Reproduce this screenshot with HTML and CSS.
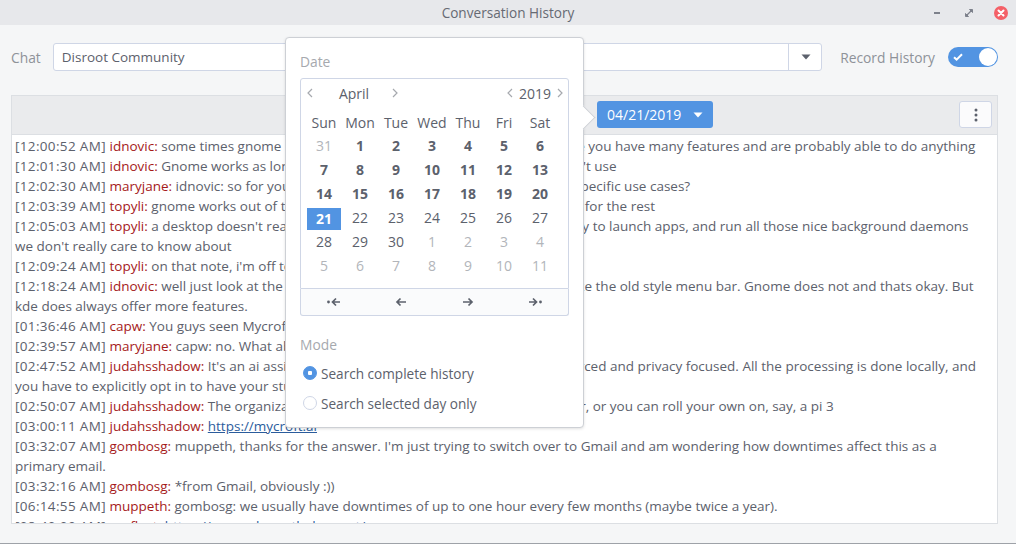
FILE: index.html
```html
<!DOCTYPE html>
<html lang="en">
<head>
<meta charset="utf-8">
<title>Conversation History</title>
<link rel="stylesheet" href="styles.css">
</head>
<body>
<div class="window">
  <header class="titlebar">
    <div class="tb-side"></div>
    <div class="title">Conversation History</div>
    <div class="wm">
      <span class="wm-btn"><svg width="16" height="16" viewBox="0 0 16 16"><rect x="5" y="7" width="6" height="2" fill="#7d818b"/></svg></span>
      <span class="wm-btn"><svg width="16" height="16" viewBox="0 0 16 16"><path d="M8.5 4.5h3v3z M7.5 11.5h-3v-3z" fill="#7d818b" stroke="#7d818b" stroke-width="1"/><path d="M10.5 5.5l-5 5" stroke="#7d818b" stroke-width="1.2"/></svg></span>
      <span class="wm-btn wm-close"><svg width="16" height="16" viewBox="0 0 16 16"><circle cx="8" cy="8" r="7" fill="#f46067"/><path d="M5.5 5.5l5 5M10.5 5.5l-5 5" stroke="#fff" stroke-width="2" stroke-linecap="round"/></svg></span>
    </div>
  </header>

  <div class="content">
    <div class="chat-row">
      <span class="dim-label">Chat</span>
      <div class="combo">
        <span class="combo-text">Disroot Community</span>
        <span class="combo-btn"><svg width="10" height="6" viewBox="0 0 10 6"><path d="M0.5 0.5h9l-4.5 5z" fill="#5c616c"/></svg></span>
      </div>
      <span class="dim-label record">Record History</span>
      <div class="switch">
        <svg class="check" width="10" height="8" viewBox="0 0 10 8"><path d="M1 4.2l2.6 2.4L9 1.2" fill="none" stroke="#fff" stroke-width="2"/></svg>
        <span class="knob"></span>
      </div>
    </div>

    <section class="panel">
      <div class="toolbar">
        <button class="date-btn"><span>04/21/2019</span><svg width="10" height="6" viewBox="0 0 10 6"><path d="M0.5 0.5h9l-4.5 5z" fill="#fff"/></svg></button>
        <button class="menu-btn"><svg width="4" height="14" viewBox="0 0 4 14"><circle cx="2" cy="2" r="1.5" fill="#5c616c"/><circle cx="2" cy="7" r="1.5" fill="#5c616c"/><circle cx="2" cy="12" r="1.5" fill="#5c616c"/></svg></button>
      </div>
      <div class="log">
        <div class="msg"><span class="ts">[12:00:52 AM]</span> <span class="nick">idnovic:</span> some times gnome is just not enough for the power users, with kde you have many features and are probably able to do anything</div>
        <div class="msg"><span class="ts">[12:01:30 AM]</span> <span class="nick">idnovic:</span> Gnome works as long as you want the defaults it gives you and don't use</div>
        <div class="msg"><span class="ts">[12:02:30 AM]</span> <span class="nick">maryjane:</span> idnovic: so for you kde is only better because of all of your own specific use cases?</div>
        <div class="msg"><span class="ts">[12:03:39 AM]</span> <span class="nick">topyli:</span> gnome works out of the box for most people, and there's extensions for the rest</div>
        <div class="msg"><span class="ts">[12:05:03 AM]</span> <span class="nick">topyli:</span> a desktop doesn't really have to do all that much, it's just a handy way to launch apps, and run all those nice background daemons we don't really care to know about</div>
        <div class="msg"><span class="ts">[12:09:24 AM]</span> <span class="nick">topyli:</span> on that note, i'm off to bed</div>
        <div class="msg"><span class="ts">[12:18:24 AM]</span> <span class="nick">idnovic:</span> well just look at the default apps, the kde apps still have features like the old style menu bar. Gnome does not and thats okay. But kde does always offer more features.</div>
        <div class="msg"><span class="ts">[01:36:46 AM]</span> <span class="nick">capw:</span> You guys seen Mycroft?</div>
        <div class="msg"><span class="ts">[02:39:57 AM]</span> <span class="nick">maryjane:</span> capw: no. What about it?</div>
        <div class="msg"><span class="ts">[02:47:52 AM]</span> <span class="nick">judahsshadow:</span> It's an ai assistant similar to alexa and siri, but it's open sourced and privacy focused. All the processing is done locally, and you have to explicitly opt in to have your stuff sent anywhere.</div>
        <div class="msg"><span class="ts">[02:50:07 AM]</span> <span class="nick">judahsshadow:</span> The organization behind Mycroft sells its own smart speaker, or you can roll your own on, say, a pi 3</div>
        <div class="msg"><span class="ts">[03:00:11 AM]</span> <span class="nick">judahsshadow:</span> <a href="#">https://mycroft.ai</a></div>
        <div class="msg"><span class="ts">[03:32:07 AM]</span> <span class="nick">gombosg:</span> muppeth, thanks for the answer. I'm just trying to switch over to Gmail and am wondering how downtimes affect this as a primary email.</div>
        <div class="msg"><span class="ts">[03:32:16 AM]</span> <span class="nick">gombosg:</span> *from Gmail, obviously :))</div>
        <div class="msg"><span class="ts">[06:14:55 AM]</span> <span class="nick">muppeth:</span> gombosg: we usually have downtimes of up to one hour every few months (maybe twice a year).</div>
        <div class="msg"><span class="ts">[08:40:09 AM]</span> <span class="nick">muflost:</span> <a href="#">https://www.wheresthebug.net/</a></div>
      </div>
    </section>
  </div>

  <div class="popover">
    <span class="pop-arrow"></span>
    <div class="section-label">Date</div>
    <div class="calendar">
      <div class="cal-head">
        <span class="chev chev-l1"><svg width="6" height="10" viewBox="0 0 6 10"><path d="M5 1L1 5l4 4" fill="none" stroke="#a6a9ae" stroke-width="1.2"/></svg></span>
        <span class="cal-month">April</span>
        <span class="chev chev-r1"><svg width="6" height="10" viewBox="0 0 6 10"><path d="M1 1l4 4-4 4" fill="none" stroke="#a6a9ae" stroke-width="1.2"/></svg></span>
        <span class="cal-year-group">
          <span class="chev"><svg width="6" height="10" viewBox="0 0 6 10"><path d="M5 1L1 5l4 4" fill="none" stroke="#a6a9ae" stroke-width="1.2"/></svg></span>
          <span class="cal-year">2019</span>
          <span class="chev"><svg width="6" height="10" viewBox="0 0 6 10"><path d="M1 1l4 4-4 4" fill="none" stroke="#a6a9ae" stroke-width="1.2"/></svg></span>
        </span>
      </div>
      <div class="cal-grid">
        <span class="dn">Sun</span><span class="dn">Mon</span><span class="dn">Tue</span><span class="dn">Wed</span><span class="dn">Thu</span><span class="dn">Fri</span><span class="dn">Sat</span>
        <span class="d other">31</span><span class="d b">1</span><span class="d b">2</span><span class="d b">3</span><span class="d b">4</span><span class="d b">5</span><span class="d b">6</span>
        <span class="d b">7</span><span class="d b">8</span><span class="d b">9</span><span class="d b">10</span><span class="d b">11</span><span class="d b">12</span><span class="d b">13</span>
        <span class="d b">14</span><span class="d b">15</span><span class="d b">16</span><span class="d b">17</span><span class="d b">18</span><span class="d b">19</span><span class="d b">20</span>
        <span class="d sel"><span>21</span></span><span class="d">22</span><span class="d">23</span><span class="d">24</span><span class="d">25</span><span class="d">26</span><span class="d">27</span>
        <span class="d">28</span><span class="d">29</span><span class="d">30</span><span class="d other">1</span><span class="d other">2</span><span class="d other">3</span><span class="d other">4</span>
        <span class="d other">5</span><span class="d other">6</span><span class="d other">7</span><span class="d other">8</span><span class="d other">9</span><span class="d other">10</span><span class="d other">11</span>
      </div>
    </div>
    <div class="cal-nav">
      <span class="nav-btn"><svg width="14" height="10" viewBox="0 0 14 10"><circle cx="1.5" cy="5" r="1.4" fill="#5c616c"/><path d="M13 5H5.5M9 1.5L5.5 5 9 8.5" fill="none" stroke="#5c616c" stroke-width="1.7"/></svg></span>
      <span class="nav-btn"><svg width="12" height="10" viewBox="0 0 12 10"><path d="M11 5H2M5.5 1.5L2 5l3.5 3.5" fill="none" stroke="#5c616c" stroke-width="1.7"/></svg></span>
      <span class="nav-btn"><svg width="12" height="10" viewBox="0 0 12 10"><path d="M1 5h9M6.5 1.5L10 5 6.5 8.5" fill="none" stroke="#5c616c" stroke-width="1.7"/></svg></span>
      <span class="nav-btn"><svg width="14" height="10" viewBox="0 0 14 10"><path d="M1 5h7.5M5 1.5L8.5 5 5 8.5" fill="none" stroke="#5c616c" stroke-width="1.7"/><circle cx="12.5" cy="5" r="1.4" fill="#5c616c"/></svg></span>
    </div>
    <div class="section-label mode">Mode</div>
    <div class="radio-list">
      <label class="radio"><span class="radio-dot checked"></span>Search complete history</label>
      <label class="radio"><span class="radio-dot"></span>Search selected day only</label>
    </div>
  </div>
</div>
</body>
</html>
```

FILE: styles.css
```css
* { box-sizing: border-box; }

html, body {
  margin: 0;
  padding: 0;
}

body {
  width: 1016px;
  height: 544px;
  overflow: hidden;
  background: #f5f6f7;
  color: #5c616c;
  font-family: "Open Sans", "Noto Sans", sans-serif;
  font-size: 13.5px;
}

.window {
  position: relative;
  height: 544px;
  display: flex;
  flex-direction: column;
  border-bottom: 1px solid #9ea2a8;
}

/* title bar */
.titlebar {
  height: 25px;
  flex: none;
  background: #e7e8eb;
  display: grid;
  grid-template-columns: 1fr auto 1fr;
  align-items: center;
}

.title {
  font-size: 13.6px;
  color: #666a73;
  line-height: 22px;
}

.wm {
  display: flex;
  justify-content: flex-end;
  gap: 16px;
  padding-right: 7px;
  padding-top: 1px;
}

.wm-btn {
  width: 16px;
  height: 16px;
  display: flex;
}

/* main content */
.content {
  flex: 1;
  display: flex;
  flex-direction: column;
  padding: 18px 18px 19px 11px;
  min-height: 0;
}

.chat-row {
  display: flex;
  align-items: center;
  height: 28px;
}

.dim-label {
  color: #8e9299;
  font-size: 13.8px;
}

.combo {
  flex: 1;
  margin-left: 12px;
  height: 28px;
  display: flex;
  background: #fff;
  border: 1px solid #cfd6e6;
  border-radius: 3px;
}

.combo-text {
  flex: 1;
  padding-left: 8px;
  line-height: 26px;
}

.combo-btn {
  width: 33px;
  border-left: 1px solid #cfd6e6;
  display: flex;
  align-items: center;
  justify-content: center;
  padding-left: 1px;
}

.record {
  margin-left: 18px;
}

.switch {
  margin-left: 13px;
  width: 50px;
  height: 20px;
  border-radius: 10px;
  background: #5294e2;
  display: flex;
  align-items: center;
  justify-content: space-between;
  padding: 0 1px 0 5px;
}

.knob {
  width: 18px;
  height: 18px;
  border-radius: 50%;
  background: #fff;
}

/* panel */
.panel {
  flex: 1;
  margin-top: 24px;
  display: flex;
  flex-direction: column;
  border: 1px solid #dcdfe3;
  min-height: 0;
}

.toolbar {
  flex: none;
  height: 39px;
  background: #eaebed;
  border-bottom: 1px solid #dcdfe3;
  display: flex;
  align-items: flex-start;
  padding: 5px 5px 0 0;
}

.date-btn {
  margin-left: 585px;
  height: 27px;
  width: 116px;
  border: 0;
  border-radius: 3px;
  background: #5294e2;
  color: #fff;
  font: inherit;
  font-size: 14px;
  display: flex;
  align-items: center;
  justify-content: space-between;
  padding: 0 10px 0 10px;
}

.menu-btn {
  margin-left: auto;
  width: 33px;
  height: 27px;
  border: 1px solid #cfd6e6;
  border-radius: 3px;
  background: #fbfbfc;
  display: flex;
  align-items: center;
  justify-content: center;
  padding: 0;
}

.log {
  flex: 1;
  background: #fff;
  padding: 1px 10px 0 3px;
  line-height: 20px;
  font-size: 13.5px;
  overflow: hidden;
}

.ts {
  letter-spacing: 0.35px;
}

.nick {
  color: #a51a1a;
}

.log a {
  color: #2b5c9c;
}

/* popover */
.popover {
  position: absolute;
  left: 285px;
  top: 37px;
  width: 299px;
  height: 391px;
  background: #fff;
  border: 1px solid #cdd0d5;
  border-radius: 4px;
  box-shadow: 0 1px 3px rgba(0, 0, 0, 0.12);
  padding: 14px 14px 0 14px;
  z-index: 5;
}

.pop-arrow {
  position: absolute;
  left: 289px;
  top: 71px;
  width: 17px;
  height: 17px;
  background: #fff;
  border-top: 1px solid #cdd0d5;
  border-right: 1px solid #cdd0d5;
  transform: rotate(45deg);
}

.section-label {
  color: #a6a9ae;
  font-size: 13.8px;
  line-height: 20px;
}

.calendar {
  margin-top: 6px;
  width: 269px;
  border: 1px solid #cfd6e6;
  border-radius: 3px 3px 0 0;
  padding: 0 10px 10px 5px;
}

.cal-head {
  height: 28px;
  display: flex;
  align-items: center;
  font-size: 14px;
  margin-left: -5px;
  margin-right: -8px;
}

.chev {
  width: 12px;
  display: flex;
  justify-content: center;
}

.chev-l1 {
  width: 18px;
}

.cal-month {
  width: 70px;
  text-align: center;
}

.cal-year-group {
  margin-left: auto;
  display: flex;
  align-items: center;
}

.cal-year {
  width: 38px;
  text-align: center;
}

.cal-grid {
  display: grid;
  grid-template-columns: repeat(7, 36px);
  grid-template-rows: 27px repeat(6, 24px);
  font-size: 14px;
}

.dn {
  align-self: end;
  height: 22px;
  text-align: center;
  line-height: 22px;
}

.d {
  text-align: center;
  line-height: 24px;
}

.d.b { font-weight: 700; }

.d.other { color: #b2b5ba; }

.d.sel {
  padding: 2px 1px 0 1px;
}

.d.sel span {
  display: block;
  height: 22px;
  line-height: 22px;
  background: #5294e2;
  color: #fff;
  font-weight: 700;
}

.cal-nav {
  width: 269px;
  height: 27px;
  border: 1px solid #cfd6e6;
  border-top: 0;
  border-radius: 0 0 3px 3px;
  background: #fafbfc;
  display: grid;
  grid-template-columns: repeat(4, 1fr);
  align-items: center;
  justify-items: center;
}

.nav-btn {
  display: flex;
}

.section-label.mode {
  margin-top: 19px;
}

.radio-list {
  margin-top: 8px;
  display: flex;
  flex-direction: column;
  gap: 10px;
}

.radio {
  display: flex;
  align-items: center;
  height: 20px;
  font-size: 13.6px;
}

.radio-dot {
  width: 14px;
  height: 14px;
  border-radius: 50%;
  border: 1px solid #cfd6e6;
  background: #fff;
  margin: 0 4px 0 3px;
}

.radio-dot.checked {
  border-color: #5294e2;
  background: radial-gradient(circle, #fff 0 2px, #5294e2 2.5px);
}
```
